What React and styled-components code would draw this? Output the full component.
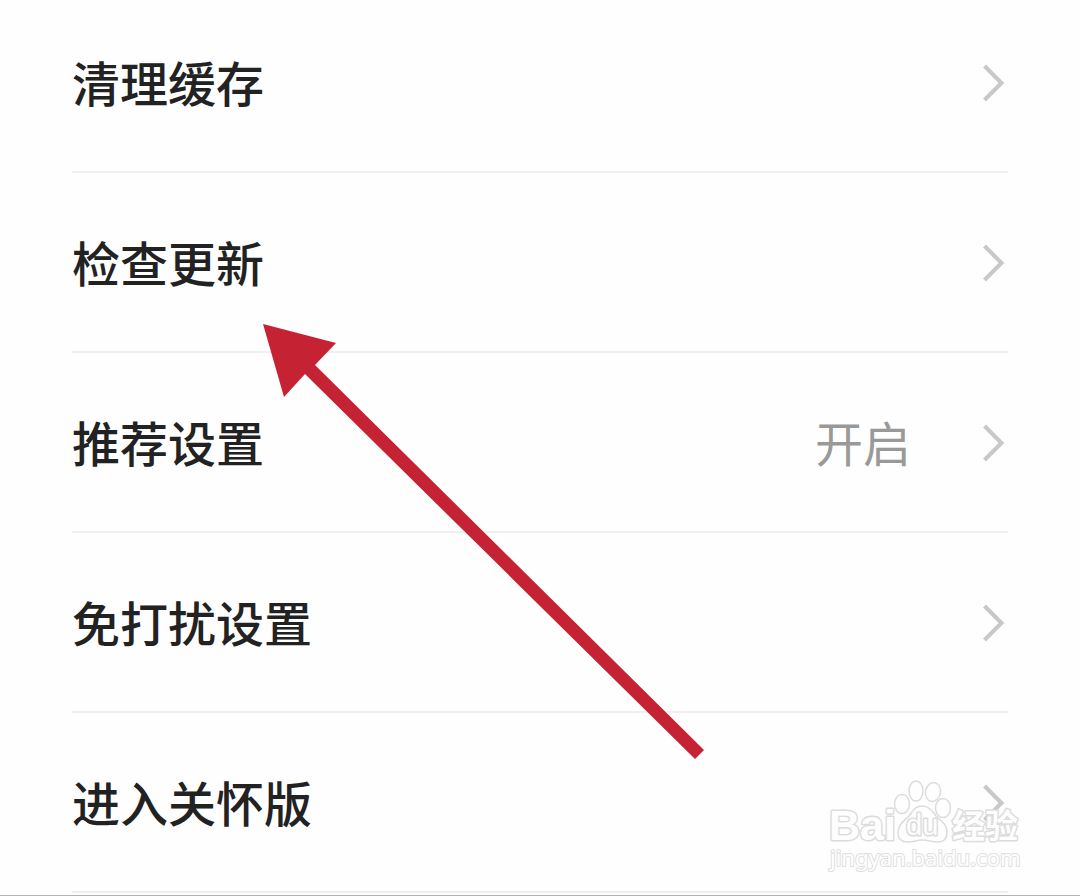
import styled, { createGlobalStyle } from "styled-components";

const settings = [
	{ label: "清理缓存" },
	{ label: "检查更新" },
	{ label: "推荐设置", value: "开启" },
	{ label: "免打扰设置" },
	{ label: "进入关怀版" },
];

const App = () => {
	return (
		<Page>
			<GlobalStyle />
			<SettingsList>
				{settings.map(({ label, value }) => (
					<SettingsItem key={label}>
						<RowButton type='button'>
							<Label>{label}</Label>
							{value && <Value>{value}</Value>}
							<Chevron viewBox='0 0 24 44' aria-hidden='true'>
								<path d='M3.5 7 L20.5 24 L3.5 41' />
							</Chevron>
						</RowButton>
					</SettingsItem>
				))}
			</SettingsList>
			<Arrow viewBox='0 0 442 436' aria-hidden='true'>
				<path d='M0 0 L73 19 L52 41 L441 426 L432 435 L42 50 L21 73 Z' />
			</Arrow>
			<Watermark viewBox='0 0 200 100' aria-label='Baidu 经验'>
				<BrandText x='1' y='63' $size={43}>
					Bai
				</BrandText>
				<g>
					<ellipse cx='74' cy='27' rx='7.5' ry='9.5' />
					<ellipse cx='88' cy='14' rx='7' ry='10' />
					<ellipse cx='105' cy='15' rx='7.5' ry='9.5' transform='rotate(12 105 15)' />
					<ellipse cx='115' cy='31' rx='7.5' ry='9.5' />
					<path d='M94 29 C87 29 85 34 81 39 C77 43 70 47 70 56 C70 62 74 65 80 65 C86 65 89 63 94 63 C100 63 104 65 110 65 C116 65 119 61 119 55 C119 47 112 43 108 39 C104 34 101 29 94 29 Z' />
				</g>
				<BrandText x='78' y='58' $size={29} $weight={400}>
					du
				</BrandText>
				<BrandText x='124' y='61' $size={33}>
					经验
				</BrandText>
				<SiteText x='2' y='89'>
					jingyan.baidu.com
				</SiteText>
			</Watermark>
		</Page>
	);
};

const GlobalStyle = createGlobalStyle`
	* {
		box-sizing: border-box;
	}

	body {
		margin: 0;
		background: #fefefe;
		font-family: "Noto Sans CJK SC", sans-serif;
	}
`;

const Page = styled.main`
	position: relative;
	overflow: hidden;
	padding-bottom: 2px;
	border-bottom: 1px solid #b4b4b4;
`;

const SettingsList = styled.ul`
	list-style: none;
	margin: -7px 0 0;
	padding: 0 72px;
`;

const SettingsItem = styled.li`
	border-bottom: 2px solid #f0f0f0;
`;

const RowButton = styled.button`
	display: flex;
	align-items: center;
	width: 100%;
	padding: 52px 0 54px;
	border: 0;
	background: none;
	color: #222;
	font-family: inherit;
	font-size: 48px;
	line-height: 72px;
	text-align: left;
	cursor: pointer;
`;

const Label = styled.span`
	flex: 1;
	font-weight: 500;
`;

const Value = styled.span`
	margin-right: 70px;
	color: #999;
	font-weight: 400;
`;

const Chevron = styled.svg`
	width: 24px;
	height: 44px;
	margin-right: 3px;
	fill: none;
	stroke: #c8c8c8;
	stroke-width: 4;
`;

const Arrow = styled.svg`
	position: absolute;
	top: 324px;
	left: 263px;
	width: 442px;
	height: 436px;
	fill: #c52233;
	pointer-events: none;
`;

const Watermark = styled.svg`
	position: absolute;
	right: 52px;
	bottom: 18px;
	width: 200px;
	height: 100px;
	overflow: visible;
	fill: #fefefe;
	stroke: #dcdcdc;
	stroke-width: 1.5;
	pointer-events: none;
`;

const BrandText = styled.text`
	font-family: "Liberation Sans", "Noto Sans CJK SC", sans-serif;
	font-size: ${({ $size }) => $size}px;
	font-weight: ${({ $weight = 700 }) => $weight};
	stroke-width: 3;
	stroke-linejoin: round;
	paint-order: stroke;
`;

const SiteText = styled.text`
	font-family: "Noto Sans", sans-serif;
	font-size: 22px;
	font-weight: 400;
	stroke: #e0e0e0;
	stroke-width: 2;
	stroke-linejoin: round;
	paint-order: stroke;
`;

export default App;
